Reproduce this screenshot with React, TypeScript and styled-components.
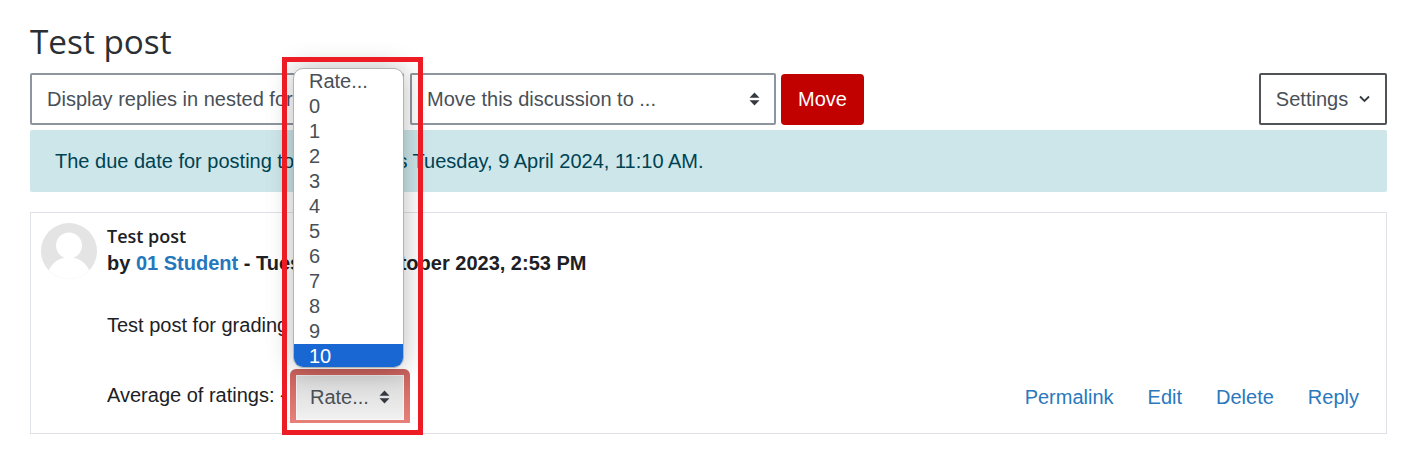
import styled, { createGlobalStyle } from "styled-components";

const GlobalStyle = createGlobalStyle`
  html, body {
    margin: 0;
    background: #fff;
  }
  body {
    font-family: "Liberation Sans", Arial, sans-serif;
    font-size: 20px;
    line-height: 1.4;
    color: #1d2125;
  }
`;

const Page = styled.div`
  width: 1420px;
  height: 458px;
  box-sizing: border-box;
  padding: 19px 33px 0 30px;
  overflow: hidden;
`;

const Title = styled.h2`
  margin: 0 0 10px;
  font-family: "Open Sans", sans-serif;
  font-weight: 400;
  font-size: 33.3px;
  line-height: 44px;
  color: #2b2f33;
`;

const Toolbar = styled.div`
  display: flex;
  align-items: center;
  height: 52px;
`;

const SelectBox = styled.div<{ $width: number; $gap: number }>`
  display: flex;
  align-items: center;
  justify-content: space-between;
  box-sizing: border-box;
  width: ${(p) => p.$width}px;
  height: 52px;
  margin-right: ${(p) => p.$gap}px;
  padding: 0 14px 0 15px;
  border: 2px solid #8f959e;
  border-radius: 2px;
  color: #495057;
  white-space: nowrap;
`;

const MoveButton = styled.button`
  box-sizing: border-box;
  width: 83px;
  height: 51px;
  padding: 0;
  border: 0;
  border-radius: 4px;
  background: #c10000;
  color: #fff;
  font: inherit;
`;

const SettingsButton = styled.button`
  display: flex;
  align-items: center;
  justify-content: center;
  gap: 11px;
  box-sizing: border-box;
  width: 128px;
  height: 52px;
  margin-left: auto;
  padding: 0;
  border: 2px solid #4f5357;
  border-radius: 2px;
  background: #fff;
  color: #495057;
  font: inherit;
`;

const DueNotice = styled.div`
  box-sizing: border-box;
  height: 62px;
  margin: 5px 0 20px;
  padding: 17px 25px;
  border-radius: 2px;
  background: #cce6ea;
  color: #004252;
`;

const PostCard = styled.article`
  box-sizing: border-box;
  height: 222px;
  padding: 10px 27px 0 10px;
  border: 1px solid #dee2e6;
`;

const PostHeader = styled.header`
  display: flex;
  gap: 10px;
`;

const Avatar = styled.svg`
  flex: none;
  width: 56px;
  height: 56px;
`;

const PostSubject = styled.div`
  font-family: "Open Sans", sans-serif;
  font-weight: 600;
  font-size: 18px;
  line-height: 26px;
`;

const PostMeta = styled.div`
  font-weight: 700;
  line-height: 28px;
  a {
    color: #2577bd;
    text-decoration: none;
  }
`;

const PostBody = styled.p`
  margin: 32px 0 0 66px;
  line-height: 28px;
`;

const PostFooter = styled.footer`
  display: flex;
  align-items: center;
  height: 54px;
  margin: 30px 0 0 66px;
`;

const RatingLabel = styled.span`
  width: 183px;
  margin-bottom: 2px;
`;

const RateControl = styled.div`
  position: relative;
  display: flex;
  align-items: center;
  justify-content: space-between;
  box-sizing: border-box;
  width: 120px;
  height: 54px;
  padding: 0 14px 2px 14px;
  border: 6px solid transparent;
  border-bottom-width: 3px;
  border-radius: 6px 6px 0 0;
  background: linear-gradient(#d7d7d7, #f1f1f1) padding-box,
    linear-gradient(#c8605b, #e8807a) border-box;
  box-shadow: inset 0 0 0 1px rgba(255, 255, 255, 0.45);
  color: #495057;
`;

const ListBox = styled.ul`
  position: absolute;
  left: -3px;
  bottom: 52px;
  z-index: 2;
  box-sizing: border-box;
  width: 111px;
  height: 300px;
  margin: 0;
  padding: 0;
  list-style: none;
  overflow: hidden;
  background: #fff;
  border: 1px solid #b4b4b4;
  border-radius: 10px;
  box-shadow: 0 0 26px rgba(0, 0, 0, 0.28);
`;

const ListOption = styled.li<{ $selected?: boolean }>`
  height: 25px;
  padding-left: 15px;
  line-height: 24px;
  color: ${(p) => (p.$selected ? "#fff" : "#495057")};
  background: ${(p) => (p.$selected ? "#1967d2" : "transparent")};
`;

const Callout = styled.div`
  position: absolute;
  left: -14px;
  bottom: -15px;
  z-index: 3;
  box-sizing: border-box;
  width: 141px;
  height: 378px;
  border: 5px solid #ed1c24;
  pointer-events: none;
`;

const Actions = styled.nav`
  display: flex;
  gap: 34px;
  margin: 2px 0 0 auto;
  a {
    color: #2a78bd;
    text-decoration: none;
  }
`;

const Caret = () => (
  <svg width="11" height="14" viewBox="0 0 11 14" aria-hidden="true">
    <path d="M5.5 0.5 10.5 5.8H0.5Z M5.5 13.5 0.5 8.2H10.5Z" fill="#343a40" />
  </svg>
);

const Chevron = () => (
  <svg width="11" height="8" viewBox="0 0 11 8" aria-hidden="true">
    <path d="M1 1.5 5.5 6 10 1.5" fill="none" stroke="#343a40" strokeWidth="1.8" />
  </svg>
);

const options = ["Rate...", "0", "1", "2", "3", "4", "5", "6", "7", "8", "9", "10"];

export default function App() {
  return (
    <Page>
      <GlobalStyle />
      <Title>Test post</Title>
      <Toolbar>
        <SelectBox $width={374} $gap={6}>
          Display replies in nested form
          <Caret />
        </SelectBox>
        <SelectBox $width={366} $gap={5}>
          Move this discussion to ...
          <Caret />
        </SelectBox>
        <MoveButton>Move</MoveButton>
        <SettingsButton>
          Settings
          <Chevron />
        </SettingsButton>
      </Toolbar>
      <DueNotice>
        The due date for posting to this forum is Tuesday, 9 April 2024, 11:10 AM.
      </DueNotice>
      <PostCard>
        <PostHeader>
          <Avatar viewBox="0 0 56 56" aria-hidden="true">
            <defs>
              <clipPath id="avatar-clip">
                <circle cx="28" cy="28" r="28" />
              </clipPath>
            </defs>
            <circle cx="28" cy="28" r="28" fill="#e4e4e4" />
            <g clipPath="url(#avatar-clip)" fill="#fff">
              <circle cx="28" cy="22.5" r="13" />
              <ellipse cx="28" cy="56" rx="22" ry="22" />
            </g>
          </Avatar>
          <div>
            <PostSubject>Test post</PostSubject>
            <PostMeta>
              by <a href="#">01 Student</a> - Tuesday, 10 October 2023, 2:53 PM
            </PostMeta>
          </div>
        </PostHeader>
        <PostBody>Test post for grading</PostBody>
        <PostFooter>
          <RatingLabel>Average of ratings: -</RatingLabel>
          <RateControl>
            Rate...
            <Caret />
            <ListBox>
              {options.map((option) => (
                <ListOption key={option} $selected={option === "10"}>
                  {option}
                </ListOption>
              ))}
            </ListBox>
            <Callout />
          </RateControl>
          <Actions>
            <a href="#">Permalink</a>
            <a href="#">Edit</a>
            <a href="#">Delete</a>
            <a href="#">Reply</a>
          </Actions>
        </PostFooter>
      </PostCard>
    </Page>
  );
}
